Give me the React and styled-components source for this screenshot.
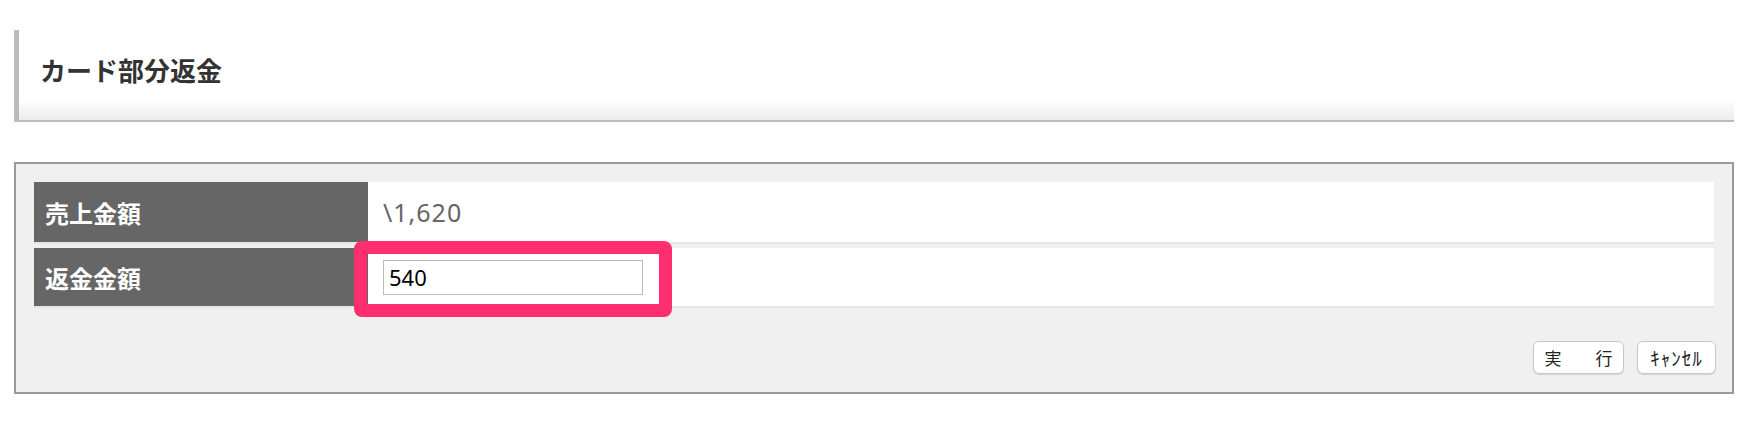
import React from "react";
import styled, { createGlobalStyle } from "styled-components";

const GlobalStyle = createGlobalStyle`
  html, body {
    margin: 0;
    background: #fff;
    font-family: "Noto Sans CJK JP", "Noto Sans", sans-serif;
  }
`;

const rows = [
  { label: "売上金額", value: "\\1,620", height: 60 },
  { label: "返金金額", input: "540", height: 58 },
];

const App = () => {
  return (
    <Page>
      <GlobalStyle />
      <Header>
        <Title>カード部分返金</Title>
      </Header>
      <Panel>
        <Table>
          {rows.map((row, i) => (
            <Row key={i} $h={row.height}>
              <Label>{row.label}</Label>
              <Value>
                {row.input ? (
                  <>
                    <AmountInput defaultValue={row.input} />
                    <Highlight />
                  </>
                ) : (
                  row.value
                )}
              </Value>
            </Row>
          ))}
        </Table>
        <Actions>
          <Button $w={91} $size={17}>実　　行</Button>
          <Button $w={79} $size={19} $spacing={1}>ｷｬﾝｾﾙ</Button>
        </Actions>
      </Panel>
    </Page>
  );
};

const Page = styled.div`
  padding: 30px 18px 0 14px;
`;

const Header = styled.div`
  border-left: 5px solid #bbb;
  border-bottom: 2px solid #bbb;
  background: linear-gradient(180deg, #fff calc(100% - 20px), #ebebeb 100%);
  padding: 19px 21px 30px;
  height: 41px;
`;

const Title = styled.h1`
  margin: 0;
  font-size: 26px;
  line-height: 41px;
  font-weight: bold;
  color: #333;
`;

const Panel = styled.div`
  margin-top: 40px;
  border: 2px solid #999;
  background: #f0f0f0;
  padding: 18px;
`;

const Table = styled.div`
  display: flex;
  flex-direction: column;
  gap: 4px;
`;

const Row = styled.div`
  display: grid;
  grid-template-columns: 334px 1fr;
  height: ${(p) => p.$h}px;
  border-bottom: 2px solid #e6e6e6;
`;

const Label = styled.div`
  background: #666;
  color: #fff;
  font-size: 24px;
  font-weight: bold;
  padding-left: 11px;
  display: flex;
  align-items: center;
`;

const Value = styled.div`
  position: relative;
  background: #fff;
  color: #666;
  font-family: "Noto Sans", "Noto Sans CJK JP", sans-serif;
  font-size: 25px;
  letter-spacing: 1px;
  padding-left: 15px;
  display: flex;
  align-items: center;
`;

const AmountInput = styled.input`
  width: 260px;
  height: 35px;
  box-sizing: border-box;
  border: 1px solid #bbb;
  padding: 0 5px;
  font-family: "Noto Sans", "Noto Sans CJK JP", sans-serif;
  font-size: 22px;
  color: #000;
  outline: none;
`;

const Highlight = styled.div`
  position: absolute;
  left: -14px;
  top: -7px;
  width: 318px;
  height: 76px;
  box-sizing: border-box;
  border: 13px solid #ff2e6e;
  border-radius: 8px;
  pointer-events: none;
`;

const Actions = styled.div`
  display: flex;
  justify-content: flex-end;
  gap: 13px;
  margin: 33px -2px 0 0;
`;

const Button = styled.button`
  width: ${(p) => p.$w}px;
  height: 33px;
  background: #fff;
  border: 1px solid #c8c8c8;
  border-radius: 6px;
  box-shadow: 0 1px 1px rgba(0, 0, 0, 0.12);
  font-family: "Noto Sans CJK JP", "Noto Sans", sans-serif;
  font-size: ${(p) => p.$size}px;
  color: #222;
  letter-spacing: ${(p) => p.$spacing || 0}px;
  padding: 0;
  cursor: pointer;
`;

export default App;
